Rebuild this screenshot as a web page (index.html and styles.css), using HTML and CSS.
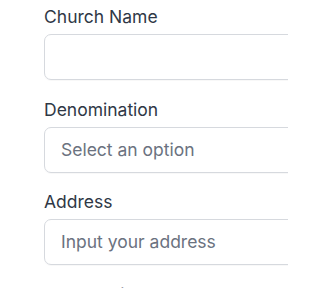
FILE: index.html
```html
<!DOCTYPE html>
<html>
<head>
<meta charset="utf-8">
<link rel="stylesheet" href="styles.css">
</head>
<body>
<form class="form">
  <div class="field">
    <label class="label">Church Name</label>
    <div class="box"></div>
  </div>
  <div class="field">
    <label class="label">Denomination</label>
    <div class="box"><span class="placeholder">Select an option</span></div>
  </div>
  <div class="field">
    <label class="label">Address</label>
    <div class="box"><span class="placeholder">Input your address</span></div>
  </div>
  <div class="field">
    <label class="label">Church Size</label>
    <div class="box"></div>
  </div>
</form>
</body>
</html>
```
FILE: styles.css
```css
html, body {
  margin: 0;
  padding: 0;
  background: #ffffff;
  overflow: hidden;
  width: 288px;
  height: 288px;
}
.form {
  box-sizing: border-box;
  display: flex;
  flex-direction: column;
  gap: 17.5px;
  padding: 5px 0 0 44px;
  width: 288px;
  height: 288px;
  overflow: hidden;
  font-family: Inter, "Liberation Sans", sans-serif;
}
.field {
  display: flex;
  flex-direction: column;
  gap: 5px;
  flex-shrink: 0;
}
.label {
  font-size: 17.5px;
  line-height: 24px;
  font-weight: 400;
  color: #2f3846;
}
.box {
  box-sizing: border-box;
  width: 260px;
  height: 46px;
  border: 1px solid #d6d9de;
  border-radius: 7px;
  display: flex;
  align-items: center;
  padding: 0 16px;
  box-shadow: 0 1px 1px rgba(0,0,0,0.03);
}
.placeholder {
  font-size: 17.5px;
  color: #6b7280;
  line-height: 24px;
}
```
